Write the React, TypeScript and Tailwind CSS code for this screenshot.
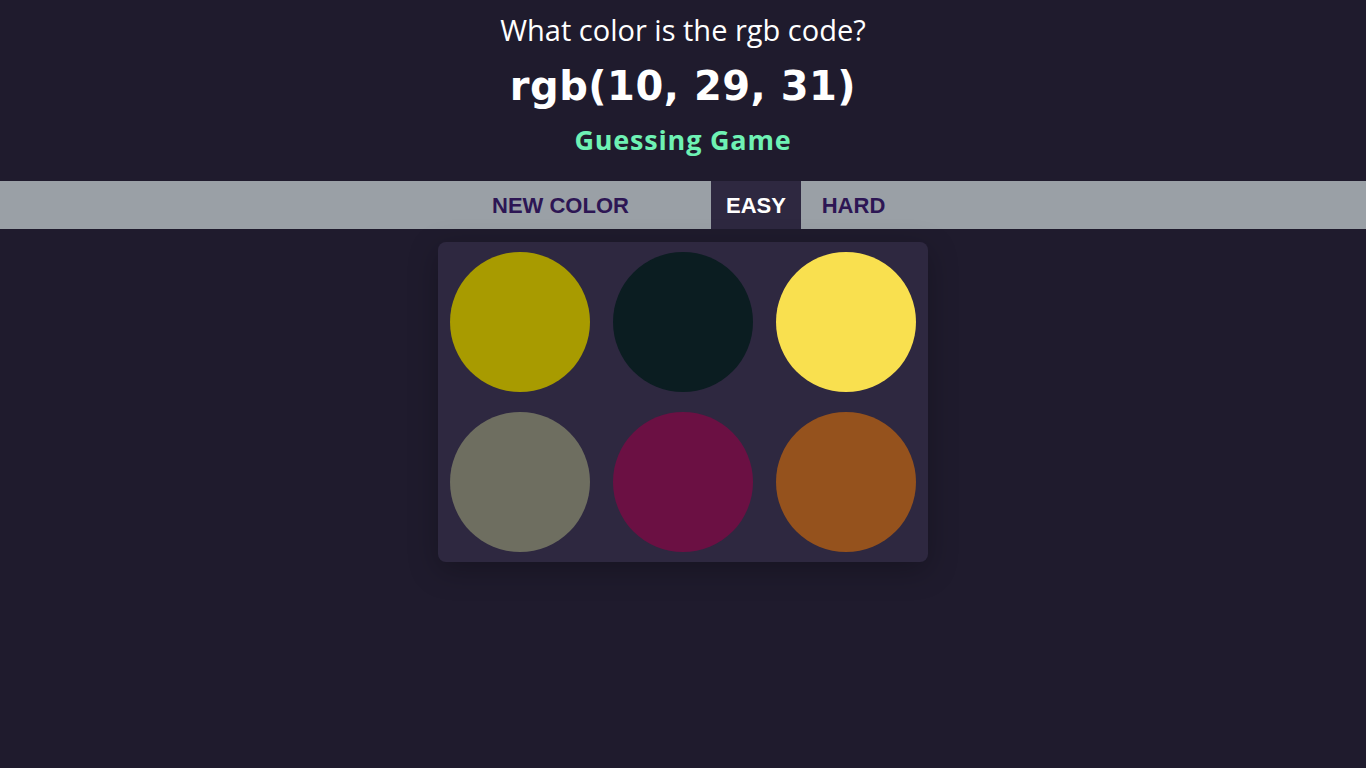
import React, { useState } from 'react';

const easyColors = ['#a89b00', '#0b1d21', '#f9e04f', '#6e6e60', '#6b1043', '#95521d'];

const App = () => {
  const [mode, setMode] = useState<'easy' | 'hard'>('easy');
  const target = 'rgb(10, 29, 31)';

  return (
    <div className="min-h-screen bg-[#1f1b2d] text-white" style={{ fontFamily: '"Open Sans", "Noto Sans", sans-serif' }}>
      {/* Header */}
      <div className="flex flex-col items-center pt-[10px] h-[181px]">
        <div className="text-[29px] leading-[40px]">What color is the rgb code?</div>
        <div className="text-[40px] font-bold leading-[50px] mt-[11px] tracking-[0.5px] font-['DejaVu_Sans',sans-serif]">{target}</div>
        <div className="text-[27px] font-bold leading-[40px] tracking-[0.8px] text-[#6ef2b4] mt-[9px]">Guessing Game</div>
      </div>

      {/* Controls */}
      <div className="h-12 bg-[#9aa0a6] flex justify-center font-['Liberation_Sans',Arial,sans-serif] font-bold text-[22px] text-[#2d1654]">
        <button className="w-[201px] h-full uppercase">New Color</button>
        <div className="w-[50px]" />
        <button
          onClick={() => setMode('easy')}
          className={`w-[90px] h-full uppercase ${mode === 'easy' ? 'bg-[#2e2840] text-white' : ''}`}
        >
          Easy
        </button>
        <button
          onClick={() => setMode('hard')}
          className={`w-[105px] h-full uppercase ${mode === 'hard' ? 'bg-[#2e2840] text-white' : ''}`}
        >
          Hard
        </button>
      </div>

      {/* Swatches */}
      <div className="flex justify-center pt-[13px]">
        <div className="w-[490px] bg-[#2e2840] rounded-lg shadow-[0_8px_30px_rgba(0,0,0,0.25)] px-3 py-[10px] grid grid-cols-3 gap-x-[23px] gap-y-5">
          {easyColors.map((c) => (
            <div key={c} className="w-[140px] h-[140px] rounded-full" style={{ backgroundColor: c }} />
          ))}
        </div>
      </div>
    </div>
  );
};

export default App;
